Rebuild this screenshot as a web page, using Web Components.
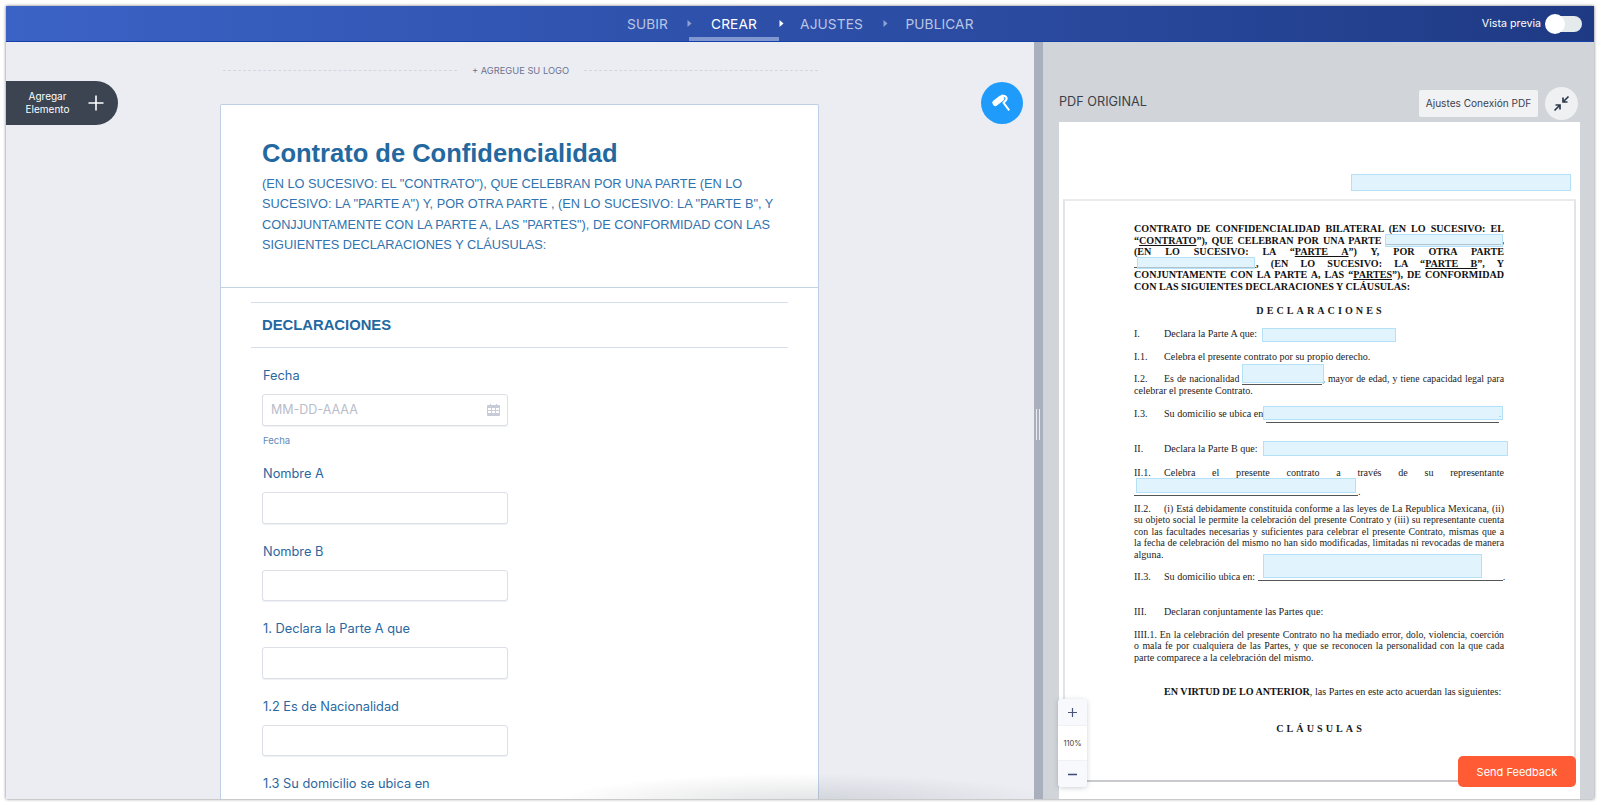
<!DOCTYPE html>
<html lang="es">
<head>
<meta charset="utf-8">
<title>Crear</title>
<style>
html, body { margin: 0; height: 100%; background: #fff; overflow: hidden; }
</style>
</head>
<body>
<app-window>
  <top-bar slot="top"></top-bar>
  <form-pane slot="left">
    <form-field label="Fecha" placeholder="MM-DD-AAAA" helper="Fecha" calendar></form-field>
    <form-field label="Nombre A"></form-field>
    <form-field label="Nombre B"></form-field>
    <form-field label="1. Declara la Parte A que"></form-field>
    <form-field label="1.2 Es de Nacionalidad"></form-field>
    <form-field label="1.3 Su domicilio se ubica en"></form-field>
  </form-pane>
  <pdf-pane slot="right"></pdf-pane>
</app-window>

<script>
class AppWindow extends HTMLElement {
  constructor() {
    super();
    this.attachShadow({mode: 'open'});
  }
  connectedCallback() {
    this.shadowRoot.innerHTML = `
      <style>
        :host { display: block; box-sizing: border-box; width: 1600px; height: 805px; padding: 6px; }
        #win {
          height: 100%; display: flex; flex-direction: column; overflow: hidden; position: relative;
          box-shadow: 0 0 3px rgba(0,0,0,.55); background: #ebedf3;
        }
        #body { flex: 1; display: flex; min-height: 0; }
        #split { width: 9px; flex: none; background: #a9afbd; position: relative; }
        #split i { position: absolute; left: 2px; top: 367px; width: 4px; height: 31px;
          border-left: 1px solid #e8eaf0; border-right: 1px solid #e8eaf0; box-sizing: border-box; }
        #smudge { position: absolute; left: 540px; bottom: -36px; width: 520px; height: 62px; pointer-events: none;
          background: radial-gradient(ellipse at center, rgba(70,75,85,.17), rgba(70,75,85,0) 70%); }
      </style>
      <div id="win">
        <slot name="top"></slot>
        <div id="body">
          <slot name="left"></slot>
          <div id="split"><i></i></div>
          <slot name="right"></slot>
        </div>
        <div id="smudge"></div>
      </div>`;
  }
}

class TopBar extends HTMLElement {
  constructor() {
    super();
    this.attachShadow({mode: 'open'});
  }
  connectedCallback() {
    const arrow = on => `<svg class="arrow${on ? ' on' : ''}" width="5" height="7" viewBox="0 0 5 7"><path d="M0.5 0 L4.5 3.5 L0.5 7 Z"/></svg>`;
    this.shadowRoot.innerHTML = `
      <style>
        :host { display: block; flex: none; }
        #bar {
          height: 36px; box-sizing: border-box; position: relative; display: flex;
          background: linear-gradient(90deg, #3b63c6 0%, #2f52ad 40%, #2a4a9f 65%, #1f3a84 100%);
          border-bottom: 1px solid #1440a8; font-family: Inter, "Liberation Sans", sans-serif;
        }
        nav { display: flex; align-items: stretch; padding-left: 621px; }
        a { display: flex; align-items: center; justify-content: center; color: #b9c5e6; font-size: 13.7px; letter-spacing: .1px; flex: none; }
        a.on { color: #fff; box-shadow: inset 0 -4px 0 #8097d2; }
        #s1 { width: 41px; margin-right: 19px; }
        #s2 { width: 90px; margin-left: -3px; }
        #s3 { width: 61px; margin: 0 21px 0 17px; }
        #s4 { width: 69px; margin-left: 17px; }
        .arrow { align-self: center; fill: #8ea1d6; flex: none; margin-top: -1px; position: relative; }
        .arrow.on { fill: #fff; }
        #prev { position: absolute; right: 12px; top: 0; height: 35px; display: flex; align-items: center; gap: 5px;
          color: #fff; font-size: 10.7px; }
        #toggle { width: 36px; height: 16px; border-radius: 8px; background: #e5eaec; position: relative; }
        #toggle b { position: absolute; left: -1px; top: -2px; width: 20px; height: 20px; border-radius: 50%; background: #fff; }
      </style>
      <div id="bar">
        <nav>
          <a id="s1">SUBIR</a>${arrow(false)}
          <a id="s2" class="on">CREAR</a>${arrow(true)}
          <a id="s3">AJUSTES</a>${arrow(false)}
          <a id="s4">PUBLICAR</a>
        </nav>
        <div id="prev"><span>Vista previa</span><div id="toggle"><b></b></div></div>
      </div>`;
  }
}

class FormField extends HTMLElement {
  constructor() {
    super();
    this.attachShadow({mode: 'open'});
  }
  connectedCallback() {
    const label = this.getAttribute('label');
    const ph = this.getAttribute('placeholder') || '';
    const helper = this.getAttribute('helper');
    const cal = this.hasAttribute('calendar') ? `
      <svg width="13" height="13" viewBox="0 0 13 13" fill="#c8ccd8">
        <path d="M1 2h2V1h1v1h5V1h1v1h2a1 1 0 0 1 1 1v9a1 1 0 0 1-1 1H1a1 1 0 0 1-1-1V3a1 1 0 0 1 1-1z"/>
        <path fill="#fff" d="M1 5h3v2H1zM5 5h3v2H5zM9 5h3v2H9zM1 8h3v2H1zM5 8h3v2H5zM9 8h3v2H9z"/>
      </svg>` : '';
    this.shadowRoot.innerHTML = `
      <style>
        :host { display: block; font-family: Inter, "Liberation Sans", sans-serif; height: 77.5px; }
        label { display: block; height: 19px; line-height: 19px; padding-left: 1px; margin-bottom: 9px; font-size: 12.8px; color: #2a679f; white-space: nowrap; }
        #box { box-sizing: border-box; width: 246px; height: 31.5px; border: 1px solid #dcdfe8; border-radius: 3px; background: #fff;
          display: flex; align-items: center; justify-content: space-between; padding: 0 7px 0 8px; font-size: 12.5px; color: #b9bdca; box-shadow: 0 1px 1px rgba(90,100,130,.1); }
        small { display: block; font-size: 9.5px; color: #5d8bbd; margin-top: 9px; padding-left: 1px; }
        :host([helper]) { height: 98px; }
      </style>
      <label>${label}</label>
      <div id="box"><span>${ph}</span>${cal}</div>
      ${helper ? `<small>${helper}</small>` : ''}`;
  }
}

class FormPane extends HTMLElement {
  constructor() {
    super();
    this.attachShadow({mode: 'open'});
  }
  connectedCallback() {
    this.shadowRoot.innerHTML = `
      <style>
        :host { display: block; flex: none; width: 1028px; background: #ebedf3; position: relative; overflow: hidden; }
        #logo { display: flex; align-items: center; margin-left: 217px; width: 595px; height: 62px; padding-bottom: 5px; box-sizing: border-box;
          font: 9.3px Inter, "Liberation Sans", sans-serif; color: #6d7390; gap: 15px; }
        #logo i { flex: 1; border-top: 1px dashed #d3d6e1; }
        #card { margin-left: 214px; width: 599px; box-sizing: border-box; background: #fff; border: 1px solid #bdd0e6; border-bottom: 0; border-radius: 2px 2px 0 0; height: 700px; }
        #head { height: 183px; box-sizing: border-box; padding: 33px 30px 0 41px; border-bottom: 1px solid #c4d3e4; color: #2a69a5; font-family: "Liberation Sans", Arial, sans-serif; }
        h1 { margin: 0 0 6px; font-size: 25.5px; line-height: 30px; font-weight: 700; color: #23689f; }
        p { margin: 0; font-size: 12.75px; line-height: 20.4px; color: #3073ae; white-space: nowrap; }
        #sec { margin: 14px 30px 0; height: 44px; border-top: 1px solid #d3dfeb; border-bottom: 1px solid #d3dfeb; display: flex; align-items: center; padding-left: 11px;
          font: 700 14.8px "Liberation Sans", Arial, sans-serif; color: #23689f; }
        #fields { margin: 18px 0 0 41px; }
        #add { position: absolute; left: 0; top: 39px; width: 112px; height: 44px; background: #3b4450; border-radius: 0 22px 22px 0; color: #fff;
          display: flex; align-items: center; font: 10px/13.5px Inter, "Liberation Sans", sans-serif; text-align: center; }
        #add span { width: 83px; }
        #fab { position: absolute; left: 975px; top: 40px; width: 42px; height: 42px; border-radius: 50%; background: #1f9bfb; display: flex; align-items: center; justify-content: center; }
      </style>
      <div id="logo"><i></i><span>+ AGREGUE SU LOGO</span><i></i></div>
      <div id="card">
        <div id="head">
          <h1>Contrato de Confidencialidad</h1>
          <p>(EN LO SUCESIVO: EL "CONTRATO"), QUE CELEBRAN POR UNA PARTE (EN LO<br>SUCESIVO: LA "PARTE A") Y, POR OTRA PARTE , (EN LO SUCESIVO: LA "PARTE B", Y<br>CONJJUNTAMENTE CON LA PARTE A, LAS "PARTES"), DE CONFORMIDAD CON LAS<br>SIGUIENTES DECLARACIONES Y CLÁUSULAS:</p>
        </div>
        <div id="sec">DECLARACIONES</div>
        <div id="fields"><slot></slot></div>
      </div>
      <div id="add"><span>Agregar<br>Elemento</span>
        <svg width="16" height="16" viewBox="0 0 16 16" stroke="#fff" stroke-width="1.6" fill="none" style="margin-left:-1px"><path d="M8 0.5v15M0.5 8h15"/></svg>
      </div>
      <div id="fab">
        <svg width="22" height="22" viewBox="0 0 22 22">
          <rect x="0.8" y="5.7" width="13" height="6" rx="2.4" fill="#fff" transform="rotate(-38 7.3 8.7)"/>
          <path d="M10.5 3.6 L13.6 4 Q16.4 5.4 15.4 7.6 L12.6 10.8 L18.2 18.4" fill="none" stroke="#fff" stroke-width="2"/>
        </svg>
      </div>`;
  }
}

class PdfField extends HTMLElement {
  constructor() {
    super();
    this.attachShadow({mode: 'open'});
  }
  connectedCallback() {
    const [x, y, w, h] = this.getAttribute('box').split(',');
    this.shadowRoot.innerHTML = `
      <style>
        :host { display: block; position: absolute; box-sizing: border-box; left: ${x}px; top: ${y}px; width: ${w}px; height: ${h}px;
          background: rgba(214,238,251,.72); border: 1px solid #b4e0f8; }
      </style>`;
  }
}

class PdfSheet extends HTMLElement {
  constructor() {
    super();
    this.attachShadow({mode: 'open'});
  }
  connectedCallback() {
    const boxes = ['292,52,220,17', '326,112,118,13', '78,135,118,12', '203,206,134,14', '183,242,82,19',
                   '204,284,240,14', '204,319,245,15', '77,356,220,15', '204,432,219,24'];
    this.shadowRoot.innerHTML = `
      <style>
        :host { display: block; flex: 1; min-height: 0; position: relative; background: #fff; overflow: hidden; margin-right: 14px; }
        #page { position: absolute; left: 4px; right: 4px; top: 77px; height: 583px; box-sizing: border-box; border: 2px solid #e3e4e7; border-bottom-color: #c9cacd; border-top-color: #e9eaec;
          padding: 22px 70px 0 69px; font: 10.1px/11.6px "Liberation Serif", "Times New Roman", serif; color: #1c1c1c; }
        div.j { text-align: justify; text-align-last: justify; white-space: nowrap; }
        div.l { white-space: nowrap; }
        div.s { font-size: 9.82px; }
        .b { font-weight: 700; color: #111; }
        .t { display: inline-block; width: 30px; font-size: 10.1px; }
        .c { text-align: center; font-weight: 700; letter-spacing: 3.05px; padding-left: 3px; }
        .u { display: inline-block; border-bottom: 1px solid #555; height: 9px; vertical-align: -1px; }
        u { text-underline-offset: 1px; }
      </style>
      <div id="page">
        <div class="b">
          <div class="j">CONTRATO DE CONFIDENCIALIDAD BILATERAL (EN LO SUCESIVO: EL</div>
          <div class="j">“<u>CONTRATO</u>”), QUE CELEBRAN POR UNA PARTE <span class="u" style="width:116px"></span>,</div>
          <div class="j">(EN LO SUCESIVO: LA “<u>PARTE A</u>”) Y, POR OTRA PARTE</div>
          <div class="j"><span class="u" style="width:122px"></span>, (EN LO SUCESIVO: LA “<u>PARTE B</u>”, Y</div>
          <div class="j">CONJUNTAMENTE CON LA PARTE A, LAS “<u>PARTES</u>”), DE CONFORMIDAD</div>
          <div class="l">CON LAS SIGUIENTES DECLARACIONES Y CLÁUSULAS:</div>
        </div>
        <div class="c" style="margin-top:12px">DECLARACIONES</div>
        <div class="l" style="margin-top:11.5px"><span class="t">I.</span>Declara la Parte A que:</div>
        <div class="l" style="margin-top:12px"><span class="t">I.1.</span>Celebra el presente contrato por su propio derecho.</div>
        <div class="j s" style="margin-top:10.5px"><span class="t">I.2.</span>Es de nacionalidad <span class="u" style="width:80px;vertical-align:-3px"></span>, mayor de edad, y tiene capacidad legal para</div>
        <div class="l">celebrar el presente Contrato.</div>
        <div class="l" style="margin-top:11px"><span class="t">I.3.</span>Su domicilio se ubica en <span class="u" style="width:233px;vertical-align:-6px"></span>.</div>
        <div class="l" style="margin-top:20.4px"><span class="t">II.</span>Declara la Parte B que:</div>
        <div class="j" style="margin-top:12.5px"><span class="t">II.1.</span>Celebra el presente contrato a través de su representante</div>
        <div class="l" style="margin-top:6.5px"><span class="u" style="width:224px"></span>.</div>
        <div class="j s" style="margin-top:5.5px"><span class="t">II.2.</span>(i) Está debidamente constituida conforme a las leyes de La Republica Mexicana, (ii)</div>
        <div class="j s">su objeto social le permite la celebración del presente Contrato y (iii) su representante cuenta</div>
        <div class="j s">con las facultades necesarias y suficientes para celebrar el presente Contrato, mismas que a</div>
        <div class="j s">la fecha de celebración del mismo no han sido modificadas, limitadas ni revocadas de manera</div>
        <div class="l">alguna.</div>
        <div class="l" style="margin-top:10.5px"><span class="t">II.3.</span>Su domicilio ubica en: <span class="u" style="width:245px"></span>.</div>
        <div class="l" style="margin-top:23.5px"><span class="t">III.</span>Declaran conjuntamente las Partes que:</div>
        <div class="j s" style="margin-top:11px">IIII.1. En la celebración del presente Contrato no ha mediado error, dolo, violencia, coerción</div>
        <div class="j s">o mala fe por cualquiera de las Partes, y que se reconocen la personalidad con la que cada</div>
        <div class="l">parte comparece a la celebración del mismo.</div>
        <div class="l" style="margin-top:22.5px"><span class="t"></span><span class="b">EN VIRTUD DE LO ANTERIOR</span>, las Partes en este acto acuerdan las siguientes:</div>
        <div class="c" style="margin-top:25px">CLÁUSULAS</div>
      </div>
      ${boxes.map(b => `<pdf-field box="${b}"></pdf-field>`).join('')}`;
  }
}

class ZoomControl extends HTMLElement {
  constructor() {
    super();
    this.attachShadow({mode: 'open'});
  }
  connectedCallback() {
    this.shadowRoot.innerHTML = `
      <style>
        :host { display: flex; flex-direction: column; position: absolute; left: 15px; bottom: 12px; width: 29px; height: 88px; border-radius: 4px; background: #fff;
          box-shadow: 0 1px 5px rgba(60,70,90,.25); font: 7.5px Inter, "Liberation Sans", sans-serif; color: #444; overflow: hidden; }
        div { display: flex; align-items: center; justify-content: center; }
        .b { height: 26px; flex: none; background: #f8f9fc; }
        .m { flex: 1; border-top: 1px solid #f0f1f4; border-bottom: 1px solid #f0f1f4; }
      </style>
      <div class="b"><svg width="11" height="11" viewBox="0 0 11 11" stroke="#4a5578" stroke-width="1.2"><path d="M5.5 1v9M1 5.5h9"/></svg></div>
      <div class="m">110%</div>
      <div class="b"><svg width="11" height="11" viewBox="0 0 11 11" stroke="#3d4a74" stroke-width="1.4"><path d="M1 5.5h9"/></svg></div>`;
  }
}

class PdfPane extends HTMLElement {
  constructor() {
    super();
    this.attachShadow({mode: 'open'});
  }
  connectedCallback() {
    this.shadowRoot.innerHTML = `
      <style>
        :host { display: flex; flex: 1; min-width: 0; flex-direction: column; background: #d1d4d9; position: relative; overflow: hidden; padding-left: 16px;
          font-family: Inter, "Liberation Sans", sans-serif; }
        #head { flex: none; height: 80px; box-sizing: border-box; padding: 42px 16px 0 0; display: flex; align-items: flex-start; }
        #title { flex: 1; font-size: 12.7px; line-height: 35px; color: #3c3f46; }
        #conn { font-size: 10.1px; height: 27px; width: 119px; margin-top: 6px; padding-bottom: 2px; box-sizing: border-box; display: flex; align-items: center; justify-content: center; background: #f1f2f4; border-radius: 2px; color: #3c4250; }
        #shrink { width: 33px; height: 33px; margin: 3px 0 0 7px; border-radius: 50%; background: #eff0f2; display: flex; align-items: center; justify-content: center; }
        #send { position: absolute; right: 18px; bottom: 12px; width: 118px; height: 31px; background: #ff5c35; border-radius: 5px; color: #fff; font-size: 11px;
          display: flex; align-items: center; justify-content: center; }
      </style>
      <div id="head">
        <div id="title">PDF ORIGINAL</div>
        <div id="conn">Ajustes Conexión PDF</div>
        <div id="shrink">
          <svg width="17" height="17" viewBox="0 0 17 17" fill="none" stroke="#2f3a4e" stroke-width="1.7">
            <path d="M15.5 1.5l-5 5M10 2.5v4.5h4.5"/><path d="M1.5 15.5l5-5M7 14.5v-4.5H2.5"/>
          </svg>
        </div>
      </div>
      <pdf-sheet></pdf-sheet>
      <zoom-control></zoom-control>
      <div id="send">Send Feedback</div>`;
  }
}

customElements.define('pdf-field', PdfField);
customElements.define('pdf-sheet', PdfSheet);
customElements.define('zoom-control', ZoomControl);
customElements.define('form-field', FormField);
customElements.define('top-bar', TopBar);
customElements.define('form-pane', FormPane);
customElements.define('pdf-pane', PdfPane);
customElements.define('app-window', AppWindow);
</script>
</body>
</html>
